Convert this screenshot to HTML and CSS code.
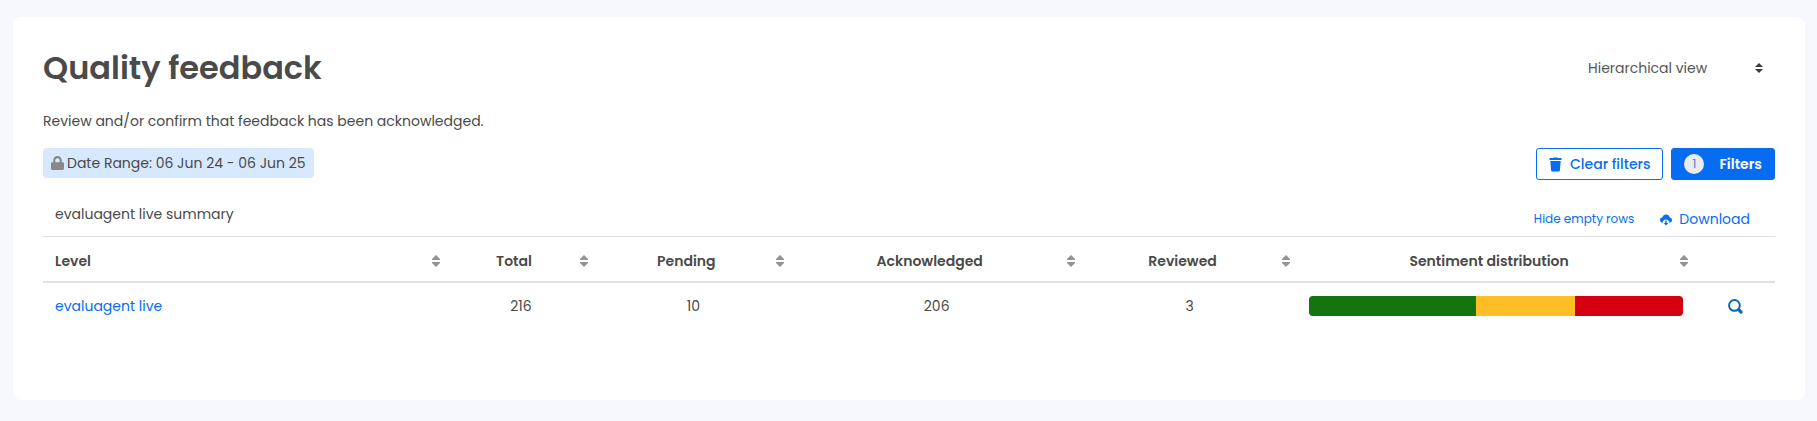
FILE: index.html
```html
<!DOCTYPE html>
<html lang="en">
<head>
    <meta charset="UTF-8">
    <meta name="viewport" content="width=device-width, initial-scale=1.0">
    <title>Quality feedback</title>
    <link rel="stylesheet" href="styles.css">
</head>
<body>
    <main class="card">
        <header class="card-header">
            <h1>Quality feedback</h1>
            <select class="view-select" aria-label="View">
                <option>Hierarchical view</option>
            </select>
        </header>
        <p class="intro">Review and/or confirm that feedback has been acknowledged.</p>

        <div class="filters">
            <span class="filter-tag">
                <svg width="13" height="15" viewBox="0 0 13 15" aria-hidden="true"><path fill="#888" d="M11.6 6.2h-.8V4.4a4.3 4.3 0 0 0-8.6 0v1.800h-.8C.6 6.200 0 6.800 0 7.600v5c0 .8.6 1.400 1.400 1.400h10.200c.8 0 1.400-.6 1.400-1.400v-5c0-.8-.6-1.400-1.400-1.400zM8.700 6.200H4.300V4.400a2.200 2.200 0 0 1 4.400 0z"/></svg>
                Date Range: 06 Jun 24 - 06 Jun 25
            </span>
            <div class="filter-actions">
                <button type="button" class="btn btn-outline">
                    <svg width="13" height="15" viewBox="0 0 13 15" aria-hidden="true"><path fill="currentColor" d="M4.500.5 4 1H.5v2h12V1H9L8.500.5zM1.300 4l.8 9.500c.1.600.5 1 1.100 1h6.600c.6 0 1-.4 1.100-1L11.700 4z"/></svg>
                    Clear filters
                </button>
                <button type="button" class="btn btn-primary">
                    <span class="count">1</span>
                    Filters
                </button>
            </div>
        </div>

        <div class="table-bar">
            <span>evaluagent live summary</span>
            <div class="table-links">
                <a href="#" class="hide-rows">Hide empty rows</a>
                <a href="#" class="download">
                    <svg width="12" height="13" viewBox="0 0 13 13" aria-hidden="true"><path fill="currentColor" d="M10.500 4.200A4 4 0 0 0 2.700 4.100 3 3 0 0 0 0 7c0 1.700 1.200 2.900 2.900 3C2.900 8 4.500 6.600 6.500 6.600S10.100 8 10.100 10C11.800 9.900 13 8.700 13 7c0-1.500-1.100-2.600-2.500-2.800zM5.700 7.600v2.600H4l2.500 2.800L9 10.200H7.300V7.600z"/></svg>
                    Download
                </a>
            </div>
        </div>

        <table class="summary">
            <colgroup>
                <col class="col-level">
                <col class="col-total">
                <col class="col-pending">
                <col class="col-acknowledged">
                <col class="col-reviewed">
                <col class="col-sentiment">
                <col class="col-view">
            </colgroup>
            <thead>
                <tr>
                    <th class="sortable">Level</th>
                    <th class="sortable">Total</th>
                    <th class="sortable">Pending</th>
                    <th class="sortable">Acknowledged</th>
                    <th class="sortable">Reviewed</th>
                    <th class="sortable">Sentiment distribution</th>
                    <th></th>
                </tr>
            </thead>
            <tbody>
                <tr>
                    <td><a href="#">evaluagent live</a></td>
                    <td>216</td>
                    <td>10</td>
                    <td>206</td>
                    <td>3</td>
                    <td>
                        <div class="sentiment">
                            <div class="positive" style="width: 44.6%"></div>
                            <div class="neutral" style="width: 26.6%"></div>
                            <div class="negative" style="width: 28.8%"></div>
                        </div>
                    </td>
                    <td>
                        <a href="#" class="view-link" aria-label="View evaluagent live">
                            <svg width="15" height="15" viewBox="0 0 14 14" fill="none" stroke="currentColor" aria-hidden="true"><circle cx="6" cy="6" r="5" stroke-width="1.800"/><path d="m10.200 10.200 2 2" stroke-width="3" stroke-linecap="round"/></svg>
                        </a>
                    </td>
                </tr>
            </tbody>
        </table>
    </main>
</body>
</html>
```

FILE: styles.css
```css
* { box-sizing: border-box; }
body { margin: 0; padding: 17px 12px 19px 13px; background-color: #f6f8fd; color: #4a4a4a; font-family: Poppins, Inter, sans-serif; font-size: 14px; line-height: 20px; }
a { color: #066df2; text-decoration: none; }
a:hover { text-decoration: underline; }
svg { display: block; flex: none; }

.card { padding: 30px 30px 71px; background-color: #fff; border-radius: 8px; }
.card-header { display: flex; align-items: center; justify-content: space-between; }
h1 { margin: 0; font-size: 32px; line-height: 42px; font-weight: 600; }
.view-select { width: 199px; height: 38px; padding: 0 28px 0 12px; border: none; background: #fff url("data:image/svg+xml,%3csvg xmlns='http://www.w3.org/2000/svg' width='4' height='5' viewBox='0 0 4 5'%3e%3cpath fill='%23343a40' d='M2 0L0 2h4zm0 5L0 3h4z'/%3e%3c/svg%3e") no-repeat right 12px center / 8px 10px; color: #555; font: inherit; appearance: none; }
.intro { margin: 22px 0 17px; }

.filters { display: flex; align-items: flex-start; justify-content: space-between; }
.filter-tag { display: flex; align-items: center; gap: 3px; height: 30px; padding: 0 8px; background-color: #d7e9ff; border-radius: 4px; }
.filter-actions { display: flex; gap: 8px; }
.btn { display: flex; align-items: center; height: 32px; padding: 0 12px; border: 1px solid #066df2; border-radius: 3px; font: inherit; font-weight: 500; cursor: pointer; }
.btn-outline { gap: 8px; background-color: #fff; color: #066df2; }
.btn-primary { gap: 15px; background-color: #066df2; color: #fff; font-weight: 600; }
.count { width: 20px; height: 20px; border-radius: 50%; background-color: #e9ecef; color: #5580bd; font-size: 12px; font-weight: 400; }

.table-bar { display: flex; align-items: center; justify-content: space-between; height: 56px; padding: 12px 25px 0 12px; }
.table-links { display: flex; align-items: center; gap: 26px; padding-top: 10px; }
.hide-rows { font-size: 12px; }
.download { display: flex; align-items: center; gap: 7px; }

.summary { width: 100%; table-layout: fixed; border-collapse: separate; border-spacing: 0; border-top: 1px solid #dee2e6; text-align: center; }
.summary th { height: 46px; padding: 4px 12px 0; border-bottom: 2px solid #dee2e6; font-weight: 600; }
.summary td { height: 46px; padding: 0 12px; }
.summary th:first-child, .summary td:first-child { text-align: left; }
.summary .sortable { padding-right: 26px; background: url("data:image/svg+xml,%3csvg xmlns='http://www.w3.org/2000/svg' width='10' height='12' viewBox='0 0 10 12'%3e%3cpath fill='%23949494' d='M5 0L1 4v1h8V4zm0 12L1 8V7h8v1z'/%3e%3c/svg%3e") no-repeat right 6px top 18px; cursor: pointer; }
.col-level { width: 23.3%; }
.col-total { width: 8.6%; }
.col-pending { width: 11.3%; }
.col-acknowledged { width: 16.8%; }
.col-reviewed { width: 12.4%; }
.col-sentiment { width: 23%; }
.col-view { width: 4.6%; }

.sentiment { display: flex; height: 20px; border-radius: 4px; overflow: hidden; }
.positive { background-color: #147510; }
.neutral { background-color: #ffbd26; }
.negative { background-color: #d40012; }
.view-link { display: flex; justify-content: center; color: #0667b3; }
```
